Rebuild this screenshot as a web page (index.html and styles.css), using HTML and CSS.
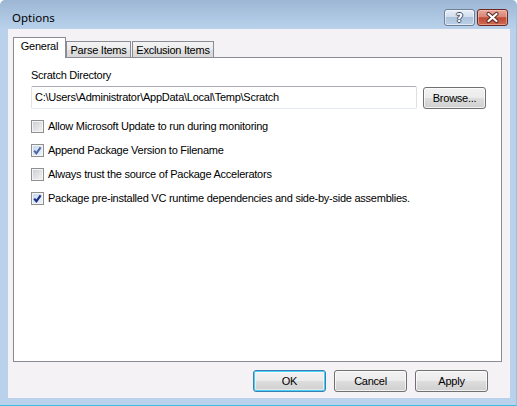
FILE: index.html
```html
<!DOCTYPE html>
<html>
<head>
<meta charset="utf-8">
<link rel="stylesheet" href="styles.css">
</head>
<body>
<div class="window">
  <div class="titlebar">
    <span class="title">Options</span>
    <div class="caption-btns">
      <div class="cap help"><span class="q">?</span></div>
      <div class="cap close">
        <svg width="31" height="17" viewBox="0 0 31 17">
          <path d="M11.5 5 L19.5 12 M11.5 12 L19.5 5" stroke="#5a2a22" stroke-width="4.2" stroke-linecap="round" fill="none"/>
          <path d="M11.5 5 L19.5 12 M11.5 12 L19.5 5" stroke="#ffffff" stroke-width="2.2" stroke-linecap="round" fill="none"/>
        </svg>
      </div>
    </div>
  </div>
  <div class="client">
    <div class="tabs">
      <div class="tab active">General</div>
      <div class="tab">Parse Items</div>
      <div class="tab">Exclusion Items</div>
    </div>
    <div class="panel">
      <div class="label">Scratch Directory</div>
      <div class="dir-row">
        <div class="input">C:\Users\Administrator\AppData\Local\Temp\Scratch</div>
        <div class="btn browse">Browse...</div>
      </div>
      <div class="checks">
        <div class="check-row"><span class="cb"></span><span class="txt">Allow Microsoft Update to run during monitoring</span></div>
        <div class="check-row"><span class="cb checked soft"><svg width="11" height="11" viewBox="0 0 11 11"><path d="M2.2 5.6 L4.4 8.3 L8.6 2.4" stroke="#4d63a6" stroke-width="2" fill="none"/></svg></span><span class="txt">Append Package Version to Filename</span></div>
        <div class="check-row"><span class="cb"></span><span class="txt">Always trust the source of Package Accelerators</span></div>
        <div class="check-row"><span class="cb checked"><svg width="11" height="11" viewBox="0 0 11 11"><path d="M2.2 5.6 L4.4 8.3 L8.6 2.4" stroke="#1c2f86" stroke-width="2.2" fill="none"/></svg></span><span class="txt">Package pre-installed VC runtime dependencies and side-by-side assemblies.</span></div>
      </div>
    </div>
    <div class="actions">
      <div class="btn default">OK</div>
      <div class="btn">Cancel</div>
      <div class="btn">Apply</div>
    </div>
  </div>
</div>
</body>
</html>
```

FILE: styles.css
```css
* { box-sizing: border-box; }
html, body { margin: 0; padding: 0; background: #ffffff; }
body {
  font-family: "Liberation Sans", Arial, sans-serif;
  font-size: 11px;
  letter-spacing: -0.25px;
  color: #000;
}
.window {
  width: 517px;
  height: 406px;
  background: linear-gradient(to bottom, #9cb6d3 0px, #aac4e0 14px, #b9d1ea 29px, #b9d1ea 100%);
  border-right: 1px solid #86cbe8;
  border-bottom: 1px solid #3cbde0;
  border-top-left-radius: 5px;
  border-top-right-radius: 5px;
  display: flex;
  flex-direction: column;
}
.titlebar {
  height: 29px;
  display: flex;
  align-items: flex-start;
  padding-left: 12px;
}
.title {
  font-family: "Segoe UI", "Noto Sans", "Liberation Sans", sans-serif;
  font-size: 11.5px;
  letter-spacing: 0;
  line-height: 16px;
  margin-top: 10px;
  color: #000;
}
.caption-btns {
  margin-left: auto;
  margin-top: 9px;
  margin-right: 8px;
  display: flex;
  gap: 2px;
}
.cap {
  width: 31px;
  height: 17px;
  border-radius: 3px;
  display: flex;
  align-items: center;
  justify-content: center;
}
.help {
  border: 1px solid #6f7f96;
  background: linear-gradient(to bottom, #e6eef8 0%, #d2deee 45%, #adc2dc 50%, #bcd0e8 100%);
  box-shadow: inset 0 0 0 1px rgba(255,255,255,0.55);
}
.help .q {
  font-family: "DejaVu Sans", sans-serif;
  font-weight: bold;
  font-size: 12px;
  letter-spacing: 0;
  line-height: 12px;
  color: #ffffff;
  text-shadow: -1px 0 #3d4c63, 1px 0 #3d4c63, 0 -1px #3d4c63, 0 1px #3d4c63;
}
.close {
  border: 1px solid #6b2b22;
  background: linear-gradient(to bottom, #e9a99b 0%, #d98676 45%, #c04a36 52%, #cf6a52 100%);
  box-shadow: inset 0 0 0 1px rgba(255,220,210,0.45);
}
.close svg { display: block; margin: -1px; }
.client {
  margin-left: 8px;
  width: 502px;
  height: 369px;
  background: #f5f2f6;
  padding: 8px 8px 0 5px;
  display: flex;
  flex-direction: column;
}
.tabs {
  height: 20px;
  display: flex;
  align-items: flex-end;
}
.tab {
  height: 16px;
  border: 1px solid #898c95;
  border-bottom: none;
  background: linear-gradient(to bottom, #f3f3f3 0%, #ebebeb 50%, #dedede 51%, #d8d8d8 100%);
  display: flex;
  align-items: center;
  justify-content: center;
  line-height: 13px;
  padding-top: 1px;
}
.tab:nth-child(2) { width: 65px; margin-right: 1px; }
.tab:nth-child(3) { width: 82px; }
.tab.active {
  width: 53px;
  height: 21px;
  margin-bottom: -1px;
  background: #ffffff;
  position: relative;
  z-index: 1;
  padding-top: 0;
  padding-bottom: 4px;
  margin-right: 0;
}
.panel {
  height: 305px;
  border: 1px solid #898c95;
  background: #ffffff;
  padding: 11px 15px 0 17px;
}
.label {
  line-height: 13px;
  height: 13px;
}
.dir-row {
  margin-top: 4px;
  display: flex;
  align-items: flex-end;
  gap: 6px;
}
.input {
  width: 387px;
  height: 23px;
  border: 1px solid #abadb3;
  border-left-color: #e2e3ea;
  border-right-color: #dbdfe6;
  border-bottom-color: #e3e9ef;
  border-radius: 2px;
  padding: 0 3px;
  line-height: 20px;
  background: #fff;
  white-space: nowrap;
}
.btn {
  width: 73px;
  height: 22px;
  border: 1px solid #707070;
  border-radius: 3px;
  background: linear-gradient(to bottom, #f2f2f2 0%, #ebebeb 50%, #dddddd 51%, #cfcfcf 100%);
  box-shadow: inset 0 0 0 1px rgba(255,255,255,0.7);
  display: flex;
  align-items: center;
  justify-content: center;
  line-height: 13px;
}
.btn.browse { width: 63px; }
.btn.default {
  border-color: #3c7fb1;
  box-shadow: inset 0 0 0 1px #48d1f8, inset 0 0 0 2px rgba(255,255,255,0.5);
}
.checks {
  margin-top: 11px;
  display: flex;
  flex-direction: column;
  gap: 11px;
}
.check-row {
  display: flex;
  align-items: center;
  height: 13px;
}
.cb {
  width: 13px;
  height: 13px;
  flex: none;
  border: 1px solid #8e8f8f;
  background: linear-gradient(135deg, #c9ccd1 0%, #e4e5e7 60%, #f4f4f4 100%);
  box-shadow: inset 0 0 0 1px #f4f4f4;
  display: flex;
  align-items: center;
  justify-content: center;
}
.cb.checked {
  background: linear-gradient(135deg, #c2d6f0 0%, #e3ecf8 70%, #f0f5fb 100%);
}
.cb.checked svg { display: block; }
.txt {
  margin-left: 4px;
  line-height: 13px;
  white-space: nowrap;
}
.actions {
  margin-top: 8px;
  display: flex;
  justify-content: flex-end;
  gap: 8px;
  padding-right: 14px;
}
```
